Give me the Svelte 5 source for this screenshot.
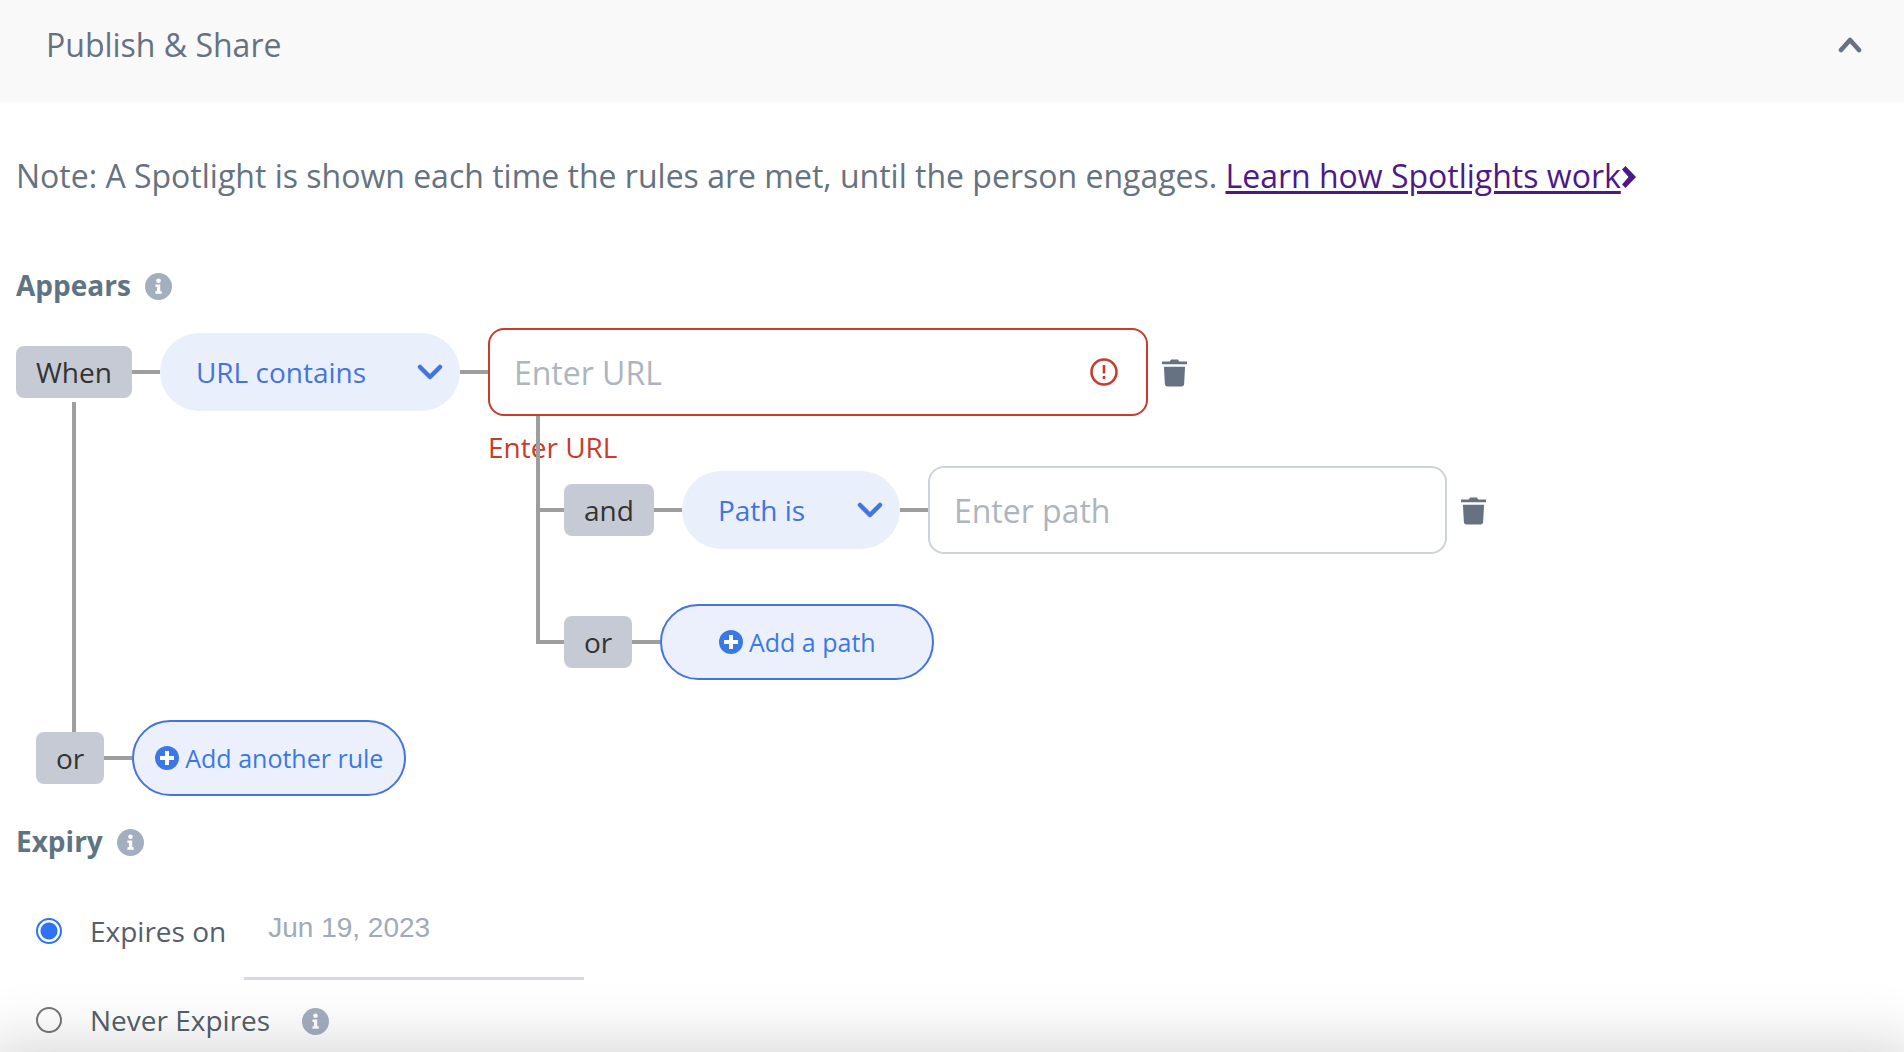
<script>
  let url = $state('');
  let path = $state('');
  let urlRule = $state('URL contains');
  let pathRule = $state('Path is');
  let expiry = $state('on');
  let date = $state('Jun 19, 2023');
</script>

{#snippet info()}
  <svg class="info" viewBox="0 0 28 28" aria-hidden="true">
    <circle cx="14" cy="14" r="14" fill="#a3afbf" />
    <circle cx="14" cy="8" r="2.4" fill="#fff" />
    <path d="M10.8 12h5v7h1.6v2.4h-6.6V19h1.6v-4.6h-1.6z" fill="#fff" />
  </svg>
{/snippet}

{#snippet trash()}
  <svg class="trash" viewBox="0 0 26 28" aria-hidden="true">
    <path d="M0 2H8L9.500 0h7L18 2h8v3H0zM2 7.500h22l-1 18.300q-.2 2.200-2.200 2.200H5.200Q3.200 28 3 25.800z" fill="#667281" />
  </svg>
{/snippet}

{#snippet plus()}
  <svg class="plus" viewBox="0 0 24 24" aria-hidden="true">
    <circle cx="12" cy="12" r="12" fill="#3b78e7" />
    <path d="M12 5v14M5 12h14" stroke="#fff" stroke-width="4" />
  </svg>
{/snippet}

{#snippet chevron()}
  <svg class="chevron" viewBox="0 0 26 16" aria-hidden="true">
    <path d="M3 3l10 10L23 3" fill="none" stroke="currentColor" stroke-width="4.500" stroke-linecap="round" stroke-linejoin="round" />
  </svg>
{/snippet}

<section class="panel">
  <header>
    <h1>Publish &amp; Share</h1>
    <button class="collapse" aria-label="Collapse section">
      <svg viewBox="0 0 24 16" aria-hidden="true">
        <path d="M3 13l9-10 9 10" fill="none" stroke="#667281" stroke-width="4.600" stroke-linecap="round" stroke-linejoin="round" />
      </svg>
    </button>
  </header>

  <main>
    <p class="note">
      Note: A Spotlight is shown each time the rules are met, until the person engages.
      <a href="#spotlights"><span>Learn how Spotlights work</span><svg viewBox="0 0 15 22" aria-hidden="true"><path d="M1 3.500L4.500 0 15 11 4.500 22 1 18.500 7.500 11z" fill="#4c1a88" /></svg></a>
    </p>

    <h2>Appears {@render info()}</h2>

    <div class="rules">
      <div class="rule">
        <div class="row">
          <span class="tag">When</span>
          <i class="wire"></i>
          <label class="pill wide">
            <select bind:value={urlRule} aria-label="URL rule">
              <option>URL contains</option>
              <option>URL is</option>
            </select>
            {@render chevron()}
          </label>
          <i class="wire"></i>
          <div class="field url">
            <input class="invalid" placeholder="Enter URL" aria-label="URL" aria-describedby="url-error" bind:value={url} />
            <svg class="alert" viewBox="0 0 28 28" aria-hidden="true">
              <circle cx="14" cy="14" r="12.500" fill="none" stroke="#c93c2c" stroke-width="2.600" />
              <path d="M14 7v8.500M14 18v3" stroke="#c93c2c" stroke-width="2.600" />
            </svg>
          </div>
          <button class="icon" aria-label="Delete rule">{@render trash()}</button>
        </div>
        <div class="nested">
          <p class="error" id="url-error">Enter URL</p>
          <div class="row branch">
            <i class="wire short"></i>
            <span class="tag">and</span>
            <i class="wire"></i>
            <label class="pill narrow">
              <select bind:value={pathRule} aria-label="Path rule">
                <option>Path is</option>
                <option>Path contains</option>
              </select>
              {@render chevron()}
            </label>
            <i class="wire"></i>
            <div class="field path">
              <input placeholder="Enter path" aria-label="Path" bind:value={path} />
            </div>
            <button class="icon" aria-label="Delete path">{@render trash()}</button>
          </div>
          <div class="row branch last">
            <i class="wire short"></i>
            <span class="tag">or</span>
            <i class="wire"></i>
            <button class="add">{@render plus()}Add a path</button>
          </div>
        </div>
      </div>
      <div class="row another">
        <span class="tag">or</span>
        <i class="wire"></i>
        <button class="add">{@render plus()}Add another rule</button>
      </div>
    </div>

    <h2>Expiry {@render info()}</h2>

    <div class="expiry">
      <div class="option first">
        <label><input type="radio" name="expiry" value="on" bind:group={expiry} />Expires on</label>
        <input class="date" aria-label="Expiry date" bind:value={date} />
      </div>
      <div class="option">
        <label><input type="radio" name="expiry" value="never" bind:group={expiry} />Never Expires</label>
        {@render info()}
      </div>
    </div>
  </main>
  <div class="fade"></div>
</section>

<style>
  :global(body) {
    background: #fff;
    font-family: 'Open Sans', 'Noto Sans', sans-serif;
    color: #667281;
  }
  .panel {
    position: relative;
    overflow: hidden;
    min-height: 100vh;
  }
  h1, h2, p { margin: 0; }
  button {
    font: inherit;
    border: 0;
    background: none;
    padding: 0;
    cursor: pointer;
  }
  svg { display: block; flex: none; }
  header {
    display: flex;
    justify-content: space-between;
    align-items: center;
    background: #f9f9f9;
    padding: 23px 42px 35px 46px;
  }
  h1 {
    font-size: 32px;
    line-height: 44px;
    font-weight: 400;
  }
  .collapse svg { width: 24px; height: 16px; }
  main { padding: 50px 16px 0; }
  .note {
    font-size: 32px;
    line-height: 48px;
    margin-bottom: 65px;
  }
  .note a { color: #4c1a88; text-decoration: none; }
  .note span {
    text-decoration: underline;
    text-decoration-thickness: 3px;
    text-underline-offset: 3px;
  }
  .note svg {
    display: inline-block;
    width: 15px;
    height: 22px;
  }
  h2 {
    display: flex;
    align-items: center;
    gap: 14px;
    font-size: 28px;
    line-height: 40px;
    font-weight: 700;
    color: #5f7482;
  }
  .info { width: 27px; height: 27px; margin-top: 2px; }
  .rules {
    padding-top: 23px;
    margin-bottom: 25px;
  }
  .rule { position: relative; padding-bottom: 40px; }
  .rule::before {
    content: '';
    position: absolute;
    left: 56px;
    top: 74px;
    bottom: -12px;
    width: 4px;
    background: #9e9e9e;
  }
  .row { display: flex; align-items: center; }
  .tag {
    background: #c6cad4;
    color: #333;
    font-size: 28px;
    line-height: 52px;
    padding: 0 20px;
    border-radius: 8px;
  }
  .wire {
    width: 28px;
    height: 4px;
    background: #9e9e9e;
    flex: none;
  }
  .wire.short { width: 24px; }
  .pill {
    position: relative;
    display: flex;
    align-items: center;
    height: 78px;
    border-radius: 39px;
    background: #e9f0fb;
    color: #4374e0;
  }
  .pill.wide { width: 300px; }
  .pill.narrow { width: 218px; }
  .pill select {
    appearance: none;
    width: 100%;
    height: 100%;
    border: 0;
    background: none;
    font: inherit;
    font-size: 28px;
    color: inherit;
    padding: 0 60px 0 36px;
  }
  .chevron {
    position: absolute;
    right: 17px;
    width: 26px;
    height: 16px;
    pointer-events: none;
  }
  .field { position: relative; display: flex; align-items: center; }
  .field.url { width: 660px; }
  .field.path { width: 519px; }
  .field input {
    box-sizing: border-box;
    width: 100%;
    height: 88px;
    border: 2px solid #ced3da;
    border-radius: 16px;
    padding: 0 24px;
    font: inherit;
    font-size: 32px;
    color: #333;
    background: #fff;
  }
  .field input.invalid { border-color: #c93c2c; padding-right: 70px; }
  .field input::placeholder { color: #adb5bf; opacity: 1; }
  .alert {
    position: absolute;
    right: 30px;
    width: 28px;
    height: 28px;
  }
  .icon { margin: 2px 0 0 14px; }
  .trash { width: 25px; height: 28px; }
  .nested {
    position: relative;
    margin-left: 472px;
  }
  .nested::after {
    content: '';
    position: absolute;
    left: 48px;
    top: 0;
    bottom: 36px;
    width: 4px;
    background: #9e9e9e;
  }
  .error {
    color: #c93c2c;
    font-size: 28px;
    line-height: 38px;
    padding: 12px 0 0;
  }
  .branch { padding-left: 52px; }
  .last { padding-top: 50px; }
  .add {
    display: flex;
    align-items: center;
    justify-content: center;
    gap: 6px;
    box-sizing: border-box;
    width: 274px;
    height: 76px;
    border: 2px solid #4374e0;
    border-radius: 38px;
    background: #ecf0fc;
    color: #3b78e7;
    font-size: 25px;
  }
  .plus { width: 24px; height: 24px; }
  .another { padding-left: 20px; }
  .expiry { padding: 41px 20px 0; }
  .option {
    display: flex;
    align-items: center;
    font-size: 28px;
    line-height: 40px;
    color: #555f6b;
    gap: 32px;
  }
  .option.first { align-items: flex-start; gap: 18px; margin-bottom: 20px; }
  .option.first label { padding-top: 9px; }
  .option label { display: flex; align-items: center; gap: 28px; }
  input[type='radio'] {
    appearance: none;
    box-sizing: border-box;
    width: 26px;
    height: 26px;
    margin: 0;
    border: 2px solid #767676;
    border-radius: 50%;
    background: #fff;
  }
  input[type='radio']:checked {
    border-color: #2f72f6;
    background: radial-gradient(circle, #2f72f6 8px, #fff 9px);
  }
  .date {
    box-sizing: border-box;
    width: 340px;
    height: 78px;
    border: 0;
    border-bottom: 3px solid #d6d9e0;
    padding: 0 24px 24px;
    background: none;
    font: 28px/40px 'Liberation Sans', Arial, sans-serif;
    color: #a1aabb;
  }
  .fade {
    position: absolute;
    left: -20px;
    right: -20px;
    top: 100%;
    height: 160px;
    box-shadow: 0 0 70px rgba(0, 0, 0, 0.2);
    pointer-events: none;
  }
</style>
